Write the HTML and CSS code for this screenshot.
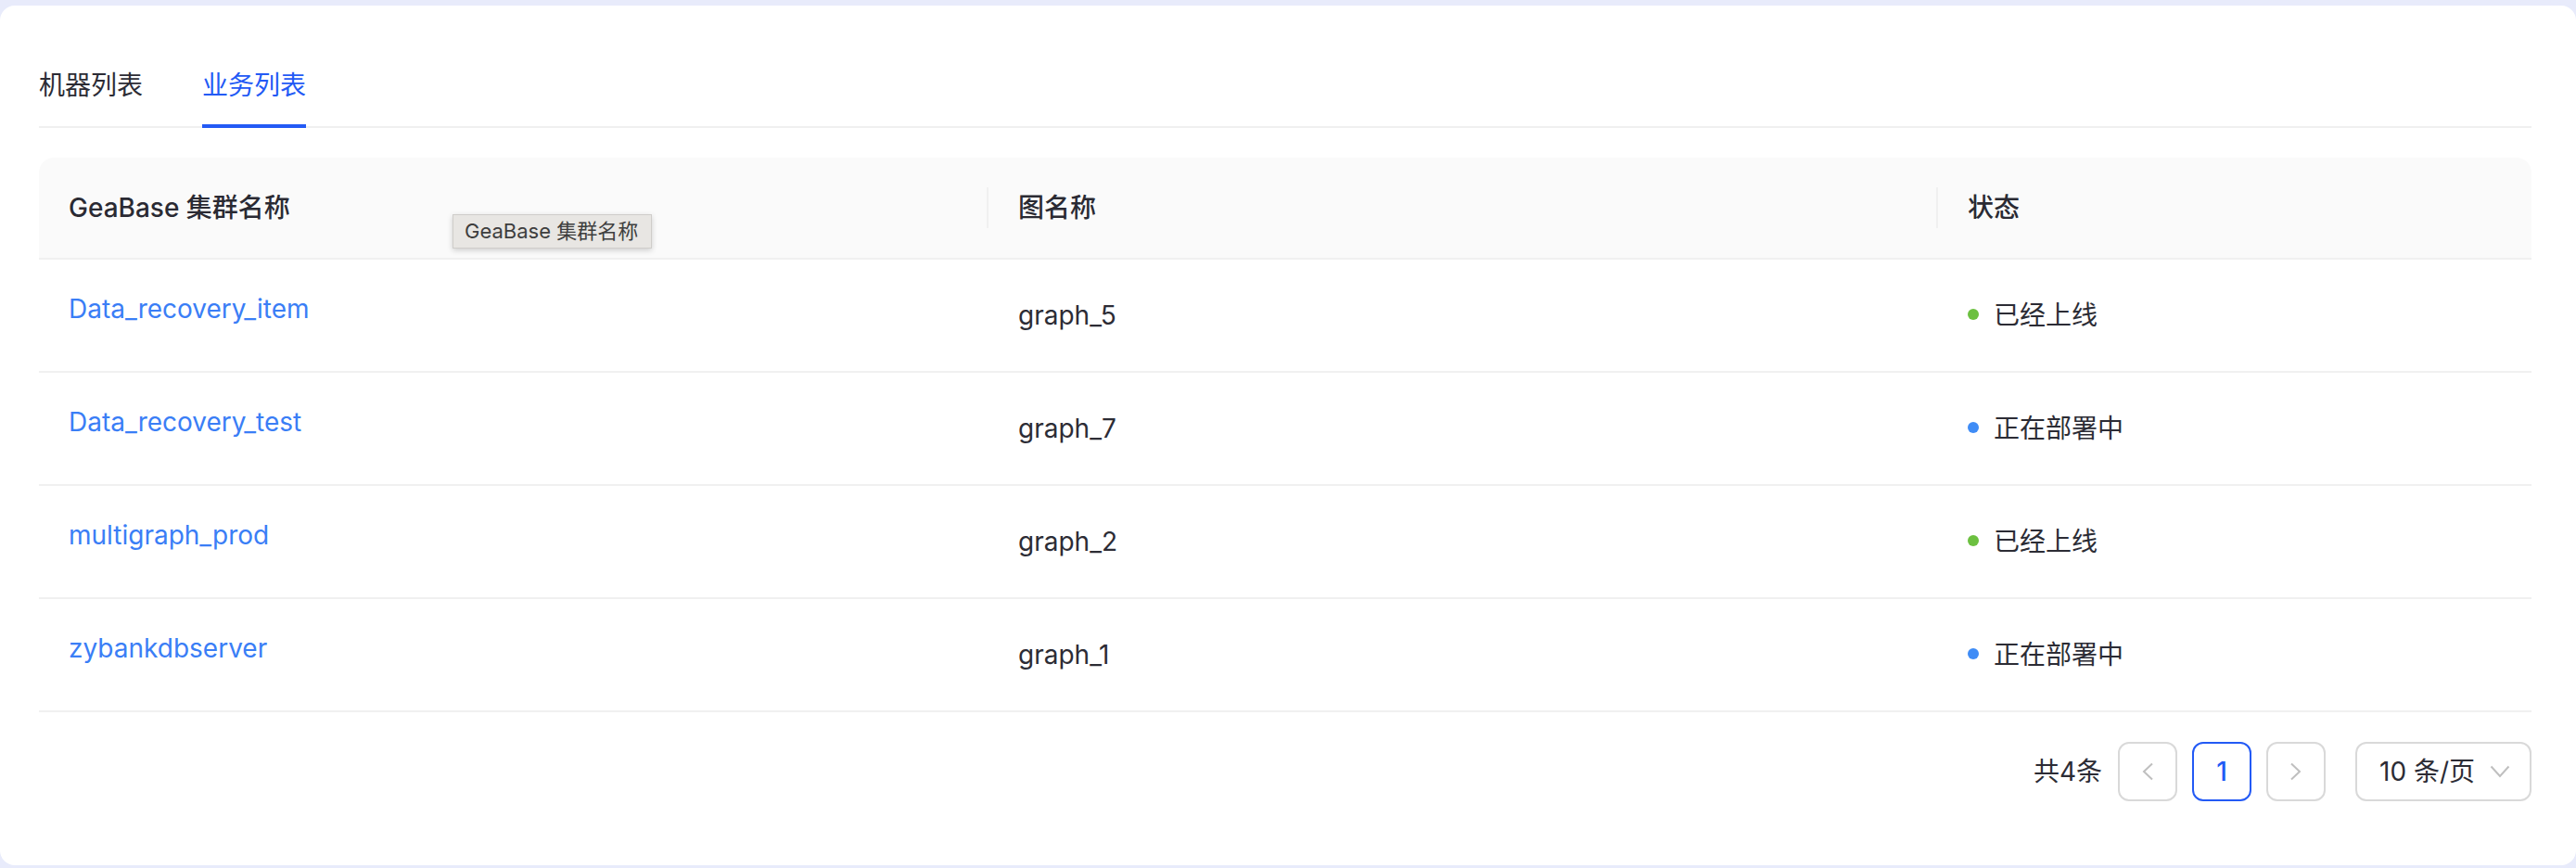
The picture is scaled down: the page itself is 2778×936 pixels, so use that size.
FILE: index.html
```html
<!DOCTYPE html>
<html lang="zh-CN">
<head>
<meta charset="utf-8">
<title>业务列表</title>
<link rel="stylesheet" href="styles.css">
</head>
<body>
<div class="card">
  <div class="tabs">
    <div class="tab">机器列表</div>
    <div class="tab active">业务列表</div>
  </div>

  <table class="table">
    <colgroup>
      <col class="col-a">
      <col class="col-b">
      <col class="col-c">
    </colgroup>
    <thead>
      <tr>
        <th class="th-first">GeaBase 集群名称<span class="tooltip">GeaBase 集群名称</span></th>
        <th>图名称</th>
        <th class="th-last">状态</th>
      </tr>
    </thead>
    <tbody>
      <tr>
        <td class="td-link"><a class="link" href="#">Data_recovery_item</a></td>
        <td>graph_5</td>
        <td><span class="dot dot-green"></span>已经上线</td>
      </tr>
      <tr>
        <td class="td-link"><a class="link" href="#">Data_recovery_test</a></td>
        <td>graph_7</td>
        <td><span class="dot dot-blue"></span>正在部署中</td>
      </tr>
      <tr>
        <td class="td-link"><a class="link" href="#">multigraph_prod</a></td>
        <td>graph_2</td>
        <td><span class="dot dot-green"></span>已经上线</td>
      </tr>
      <tr>
        <td class="td-link"><a class="link" href="#">zybankdbserver</a></td>
        <td>graph_1</td>
        <td><span class="dot dot-blue"></span>正在部署中</td>
      </tr>
    </tbody>
  </table>

  <div class="pager">
    <span class="total">共4条</span>
    <button class="pg-btn" type="button" aria-label="上一页">
      <svg width="14" height="20" viewBox="0 0 14 20"><polyline points="12,1.5 3,10 12,18.5" fill="none" stroke="#bfbfbf" stroke-width="2"/></svg>
    </button>
    <button class="pg-btn pg-active" type="button">1</button>
    <button class="pg-btn" type="button" aria-label="下一页">
      <svg width="14" height="20" viewBox="0 0 14 20"><polyline points="2,1.5 11,10 2,18.5" fill="none" stroke="#bfbfbf" stroke-width="2"/></svg>
    </button>
    <div class="size-select">
      <span class="size-text">10 条/页</span>
      <svg class="size-arrow" width="22" height="14" viewBox="0 0 22 14"><polyline points="1.5,1.5 11,12 20.5,1.5" fill="none" stroke="#bfbfbf" stroke-width="2"/></svg>
    </div>
  </div>
</div>
</body>
</html>
```

FILE: styles.css
```css
html, body {
  margin: 0;
  padding: 0;
}

body {
  background: #e8ebfb;
  font-family: Inter, "Noto Sans CJK SC", sans-serif;
  color: #2c2c35;
  font-size: 28px;
  padding: 6px 0 3px;
}

.card {
  background: #ffffff;
  border-radius: 16px;
  padding: 40px 48px 69px 42px;
}

/* Tabs */
.tabs {
  display: flex;
  gap: 64px;
  border-bottom: 2px solid #f0f0f0;
}

.tab {
  position: relative;
  padding: 24px 0 22px;
  line-height: 44px;
  font-size: 28px;
  color: #2c2c35;
}

.tab.active {
  color: #235af5;
}

.tab.active::after {
  content: "";
  position: absolute;
  left: 0;
  right: 0;
  bottom: -2px;
  height: 4px;
  background: #235af5;
}

/* Table */
.table {
  width: 100%;
  margin-top: 32px;
  border-collapse: separate;
  border-spacing: 0;
  table-layout: fixed;
}

.col-a { width: 1024px; }
.col-b { width: 1024px; }

.table th {
  position: relative;
  text-align: left;
  background: #fafafa;
  font-weight: 500;
  color: #2a2a33;
  padding: 32px 32px;
  line-height: 44px;
  border-bottom: 2px solid #f0f0f0;
}

.table th.th-first {
  border-top-left-radius: 16px;
}

.table th.th-last {
  border-top-right-radius: 16px;
}

.table th:not(:last-child)::after {
  content: "";
  position: absolute;
  right: 0;
  top: 50%;
  width: 2px;
  height: 44px;
  margin-top: -22px;
  background: #f0f0f0;
}

.table td {
  padding: 38px 32px;
  line-height: 44px;
  border-bottom: 2px solid #f0f0f0;
  color: #2c2c35;
  white-space: nowrap;
}

.table td.td-link {
  padding-top: 31px;
  padding-bottom: 45px;
}

.link {
  color: #3a7ef6;
  text-decoration: none;
}

.dot {
  display: inline-block;
  width: 12px;
  height: 12px;
  border-radius: 50%;
  margin-right: 16px;
  vertical-align: middle;
  position: relative;
  top: -3px;
}

.dot-green { background: #6cc040; }
.dot-blue { background: #3f8cf6; }

/* Native-looking tooltip */
.tooltip {
  position: absolute;
  left: 446px;
  top: 61px;
  z-index: 5;
  background: #e8e6e3;
  border: 1px solid #cfcdca;
  box-shadow: 0 2px 6px rgba(0, 0, 0, 0.18);
  color: #3e3e3e;
  font-size: 22px;
  font-weight: 400;
  line-height: 35px;
  padding: 0 14px 0 12px;
  white-space: nowrap;
}

/* Pagination */
.pager {
  display: flex;
  justify-content: flex-end;
  align-items: center;
  margin-top: 32px;
}

.total {
  line-height: 64px;
  margin-right: 17px;
  color: #2c2c35;
}

.pg-btn {
  box-sizing: border-box;
  width: 64px;
  height: 64px;
  margin-right: 16px;
  border: 2px solid #d9d9d9;
  border-radius: 12px;
  background: #ffffff;
  display: flex;
  align-items: center;
  justify-content: center;
  padding: 0;
  font-family: Inter, "Noto Sans CJK SC", sans-serif;
  font-size: 28px;
  color: #2c2c35;
}

.pg-btn:nth-of-type(3) {
  margin-right: 32px;
}

.pg-active {
  border-color: #235af5;
  color: #235af5;
  font-weight: 500;
}

.size-select {
  box-sizing: border-box;
  width: 190px;
  height: 64px;
  border: 2px solid #d9d9d9;
  border-radius: 12px;
  display: flex;
  align-items: center;
  justify-content: space-between;
  padding: 0 21px 0 24px;
}

.size-text {
  color: #2c2c35;
  font-size: 28px;
  line-height: 44px;
}

.size-arrow {
  display: block;
}
```
